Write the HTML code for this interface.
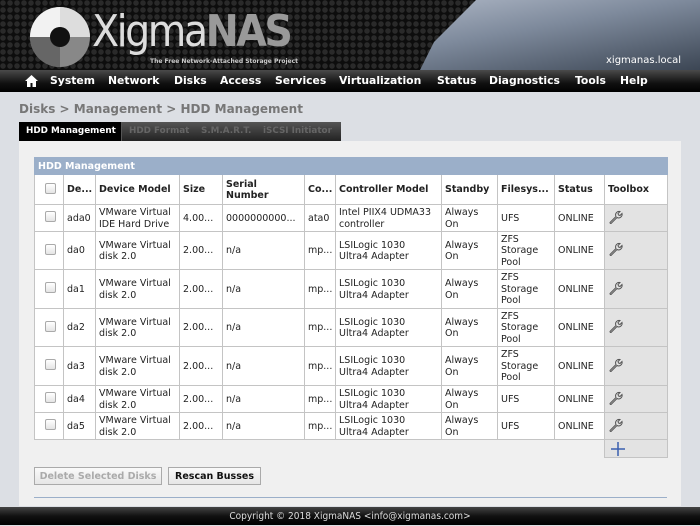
<!DOCTYPE html>
<html><head><meta charset="utf-8"><style>
*{margin:0;padding:0;box-sizing:border-box}
body{width:700px;height:525px;overflow:hidden;background:#dcdfe4;font-family:"DejaVu Sans","Liberation Sans",sans-serif;font-size:9.5px;color:#222;position:relative}
#hdr{position:absolute;left:0;top:0;width:700px;height:70px;background:radial-gradient(circle at 3px 3px,#2a2a2a 2.5px,#0d0d0d 3px) 0 0/7px 7px,#111}
#disk{position:absolute;left:420px;top:0;width:280px;height:70px;background:linear-gradient(170deg,#aab3c2 0%,#7e8a9c 40%,#3c4654 100%);clip-path:polygon(20% 0,100% 0,100% 100%,0 100%,5% 60%)}
#nav{position:absolute;left:0;top:70px;width:700px;height:22px;background:linear-gradient(#4a4a4a,#111 60%,#000);color:#fff;font-weight:bold;font-size:10.8px;white-space:nowrap}
#nav span{position:absolute;top:4px}
.crumb{position:absolute;left:19px;top:102px;font-size:12px;font-weight:bold;color:#777}
#tabs{position:absolute;left:19px;top:122px;width:322px;height:19px;background:linear-gradient(#555,#222);font-size:8.8px;font-weight:bold;white-space:nowrap}
#tabs span{position:absolute;top:4px;color:#666}
#panel{position:absolute;left:19px;top:141px;width:662px;height:365px;background:#f0f0f0}
table{position:absolute;left:34px;top:157px;border-collapse:collapse;width:633px;table-layout:fixed}
td,th{border:1px solid #c4c4c4;background:#fff;padding:1px 3px 0;vertical-align:middle;line-height:11.5px;overflow:hidden;white-space:nowrap;text-align:left}
th{font-weight:bold}
.cap td{background:#9bafc9;color:#fff;font-weight:bold;height:17px;border:1px solid #9bafc9}
td.tb{background:#e3e3e3}
.cb{display:inline-block;width:11px;height:11px;border:1px solid #aaa;border-radius:2px;background:linear-gradient(#fff,#e4e4e4);margin-left:7px}
.btn{position:absolute;top:467px;height:18px;border:1px solid #aaa;font-size:9.5px;font-weight:bold;padding:3px 0 0;text-align:center;background:linear-gradient(#fafafa,#e6e6e6);white-space:nowrap}
#foot{position:absolute;left:0;top:507px;width:700px;height:18px;background:linear-gradient(#444,#111 50%,#000);color:#ddd;font-family:"DejaVu Sans Condensed","Liberation Sans Narrow",sans-serif;font-size:10px;text-align:center;line-height:19px}
</style></head><body>
<div id="hdr">
<div id="disk"></div>
<svg style="position:absolute;left:28px;top:5px" width="64" height="64" viewBox="0 0 64 64">
<circle cx="32" cy="32" r="30" fill="#888"/>
<path d="M32 2A30 30 0 0 1 62 32L42 32A10 10 0 0 0 32 22Z" fill="#ddd"/>
<path d="M2 32A30 30 0 0 1 32 2L32 22A10 10 0 0 0 22 32Z" fill="#f2f2f2"/>
<path d="M32 62A30 30 0 0 1 2 32L22 32A10 10 0 0 0 32 42Z" fill="#666"/>
<circle cx="32" cy="32" r="10" fill="#111"/>
</svg>
<div style="position:absolute;left:92px;top:4px;font-family:'DejaVu Sans Condensed','Liberation Sans Narrow',sans-serif;font-size:44px;color:#ddd;letter-spacing:-2.5px;line-height:56px">Xigma<b style="color:#999">NAS</b></div>
<div style="position:absolute;left:150px;top:58px;font-size:6px;font-weight:bold;color:#ccc">The Free Network-Attached Storage Project</div>
<div style="position:absolute;left:606px;top:55px;font-size:10px;color:#fff">xigmanas.local</div>
</div>
<div id="nav">
<svg style="position:absolute;left:25px;top:5px" width="13" height="12" viewBox="0 0 13 12"><path d="M6.5 0L0 6h2v6h3.5V8h2v4H11V6h2z" fill="#fff"/></svg>
<span style="left:50px">System</span><span style="left:108px">Network</span><span style="left:174px">Disks</span><span style="left:220px">Access</span><span style="left:275px">Services</span><span style="left:339px">Virtualization</span><span style="left:437px">Status</span><span style="left:489px">Diagnostics</span><span style="left:575px">Tools</span><span style="left:620px">Help</span>
</div>
<div class="crumb">Disks &gt; Management &gt; HDD Management</div>
<div id="tabs">
<span style="left:0;top:0;height:19px;width:103px;background:#000;color:#fff;padding:4px 0 0 7px;border-right:1px solid #555">HDD Management</span>
<span style="left:110px">HDD Format</span><span style="left:182px">S.M.A.R.T.</span><span style="left:244px">iSCSI Initiator</span>
</div>
<div id="panel"></div>
<table>
<colgroup><col style="width:29px"><col style="width:32px"><col style="width:84px"><col style="width:43px"><col style="width:82px"><col style="width:31px"><col style="width:106px"><col style="width:56px"><col style="width:57px"><col style="width:50px"><col style="width:63px"></colgroup>
<tr class="cap"><td colspan="11">HDD Management</td></tr>
<tr style="height:30px"><th><span class="cb"></span></th><th>De...</th><th>Device Model</th><th>Size</th><th>Serial<br>Number</th><th>Co...</th><th>Controller Model</th><th>Standby</th><th>Filesys...</th><th>Status</th><th>Toolbox</th></tr>
<tr style="height:27px"><td><span class="cb"></span></td><td>ada0</td><td>VMware Virtual<br>IDE Hard Drive</td><td>4.00...</td><td>0000000000...</td><td>ata0</td><td>Intel PIIX4 UDMA33<br>controller</td><td>Always<br>On</td><td>UFS</td><td>ONLINE</td><td class="tb"><svg width="16" height="16" viewBox="0 0 16 16"><path d="M2 13.5l6-6a3.5 3.5 0 0 1 4-5l-2 2 .5 1.5 1.5.5 2-2a3.5 3.5 0 0 1-5 4l-6 6a1 1 0 0 1-1-1z" fill="none" stroke="#555" stroke-width="1"/></svg></td></tr>
<tr style="height:38px"><td><span class="cb"></span></td><td>da0</td><td>VMware Virtual<br>disk 2.0</td><td>2.00...</td><td>n/a</td><td>mp...</td><td>LSILogic 1030<br>Ultra4 Adapter</td><td>Always<br>On</td><td>ZFS<br>Storage<br>Pool</td><td>ONLINE</td><td class="tb"><svg width="16" height="16" viewBox="0 0 16 16"><path d="M2 13.5l6-6a3.5 3.5 0 0 1 4-5l-2 2 .5 1.5 1.5.5 2-2a3.5 3.5 0 0 1-5 4l-6 6a1 1 0 0 1-1-1z" fill="none" stroke="#555" stroke-width="1"/></svg></td></tr>
<tr style="height:39px"><td><span class="cb"></span></td><td>da1</td><td>VMware Virtual<br>disk 2.0</td><td>2.00...</td><td>n/a</td><td>mp...</td><td>LSILogic 1030<br>Ultra4 Adapter</td><td>Always<br>On</td><td>ZFS<br>Storage<br>Pool</td><td>ONLINE</td><td class="tb"><svg width="16" height="16" viewBox="0 0 16 16"><path d="M2 13.5l6-6a3.5 3.5 0 0 1 4-5l-2 2 .5 1.5 1.5.5 2-2a3.5 3.5 0 0 1-5 4l-6 6a1 1 0 0 1-1-1z" fill="none" stroke="#555" stroke-width="1"/></svg></td></tr>
<tr style="height:38px"><td><span class="cb"></span></td><td>da2</td><td>VMware Virtual<br>disk 2.0</td><td>2.00...</td><td>n/a</td><td>mp...</td><td>LSILogic 1030<br>Ultra4 Adapter</td><td>Always<br>On</td><td>ZFS<br>Storage<br>Pool</td><td>ONLINE</td><td class="tb"><svg width="16" height="16" viewBox="0 0 16 16"><path d="M2 13.5l6-6a3.5 3.5 0 0 1 4-5l-2 2 .5 1.5 1.5.5 2-2a3.5 3.5 0 0 1-5 4l-6 6a1 1 0 0 1-1-1z" fill="none" stroke="#555" stroke-width="1"/></svg></td></tr>
<tr style="height:39px"><td><span class="cb"></span></td><td>da3</td><td>VMware Virtual<br>disk 2.0</td><td>2.00...</td><td>n/a</td><td>mp...</td><td>LSILogic 1030<br>Ultra4 Adapter</td><td>Always<br>On</td><td>ZFS<br>Storage<br>Pool</td><td>ONLINE</td><td class="tb"><svg width="16" height="16" viewBox="0 0 16 16"><path d="M2 13.5l6-6a3.5 3.5 0 0 1 4-5l-2 2 .5 1.5 1.5.5 2-2a3.5 3.5 0 0 1-5 4l-6 6a1 1 0 0 1-1-1z" fill="none" stroke="#555" stroke-width="1"/></svg></td></tr>
<tr style="height:27px"><td><span class="cb"></span></td><td>da4</td><td>VMware Virtual<br>disk 2.0</td><td>2.00...</td><td>n/a</td><td>mp...</td><td>LSILogic 1030<br>Ultra4 Adapter</td><td>Always<br>On</td><td>UFS</td><td>ONLINE</td><td class="tb"><svg width="16" height="16" viewBox="0 0 16 16"><path d="M2 13.5l6-6a3.5 3.5 0 0 1 4-5l-2 2 .5 1.5 1.5.5 2-2a3.5 3.5 0 0 1-5 4l-6 6a1 1 0 0 1-1-1z" fill="none" stroke="#555" stroke-width="1"/></svg></td></tr>
<tr style="height:27px"><td><span class="cb"></span></td><td>da5</td><td>VMware Virtual<br>disk 2.0</td><td>2.00...</td><td>n/a</td><td>mp...</td><td>LSILogic 1030<br>Ultra4 Adapter</td><td>Always<br>On</td><td>UFS</td><td>ONLINE</td><td class="tb"><svg width="16" height="16" viewBox="0 0 16 16"><path d="M2 13.5l6-6a3.5 3.5 0 0 1 4-5l-2 2 .5 1.5 1.5.5 2-2a3.5 3.5 0 0 1-5 4l-6 6a1 1 0 0 1-1-1z" fill="none" stroke="#555" stroke-width="1"/></svg></td></tr>
<tr style="height:18px"><td colspan="10" style="border:none;background:transparent"></td><td class="tb"><svg width="16" height="16" viewBox="0 0 16 16" style="display:block;margin-left:2px"><path d="M8 1v14M1 8h14" stroke="#3a5fb0" stroke-width="1.5"/></svg></td></tr>
</table>
<div class="btn" style="left:34px;width:128px;color:#aaa">Delete Selected Disks</div>
<div class="btn" style="left:168px;width:93px;color:#111">Rescan Busses</div>
<div style="position:absolute;left:34px;top:497px;width:633px;height:1px;background:#9bafc9"></div>
<div id="foot">Copyright © 2018 XigmaNAS &lt;info@xigmanas.com&gt;</div>
</body></html>
